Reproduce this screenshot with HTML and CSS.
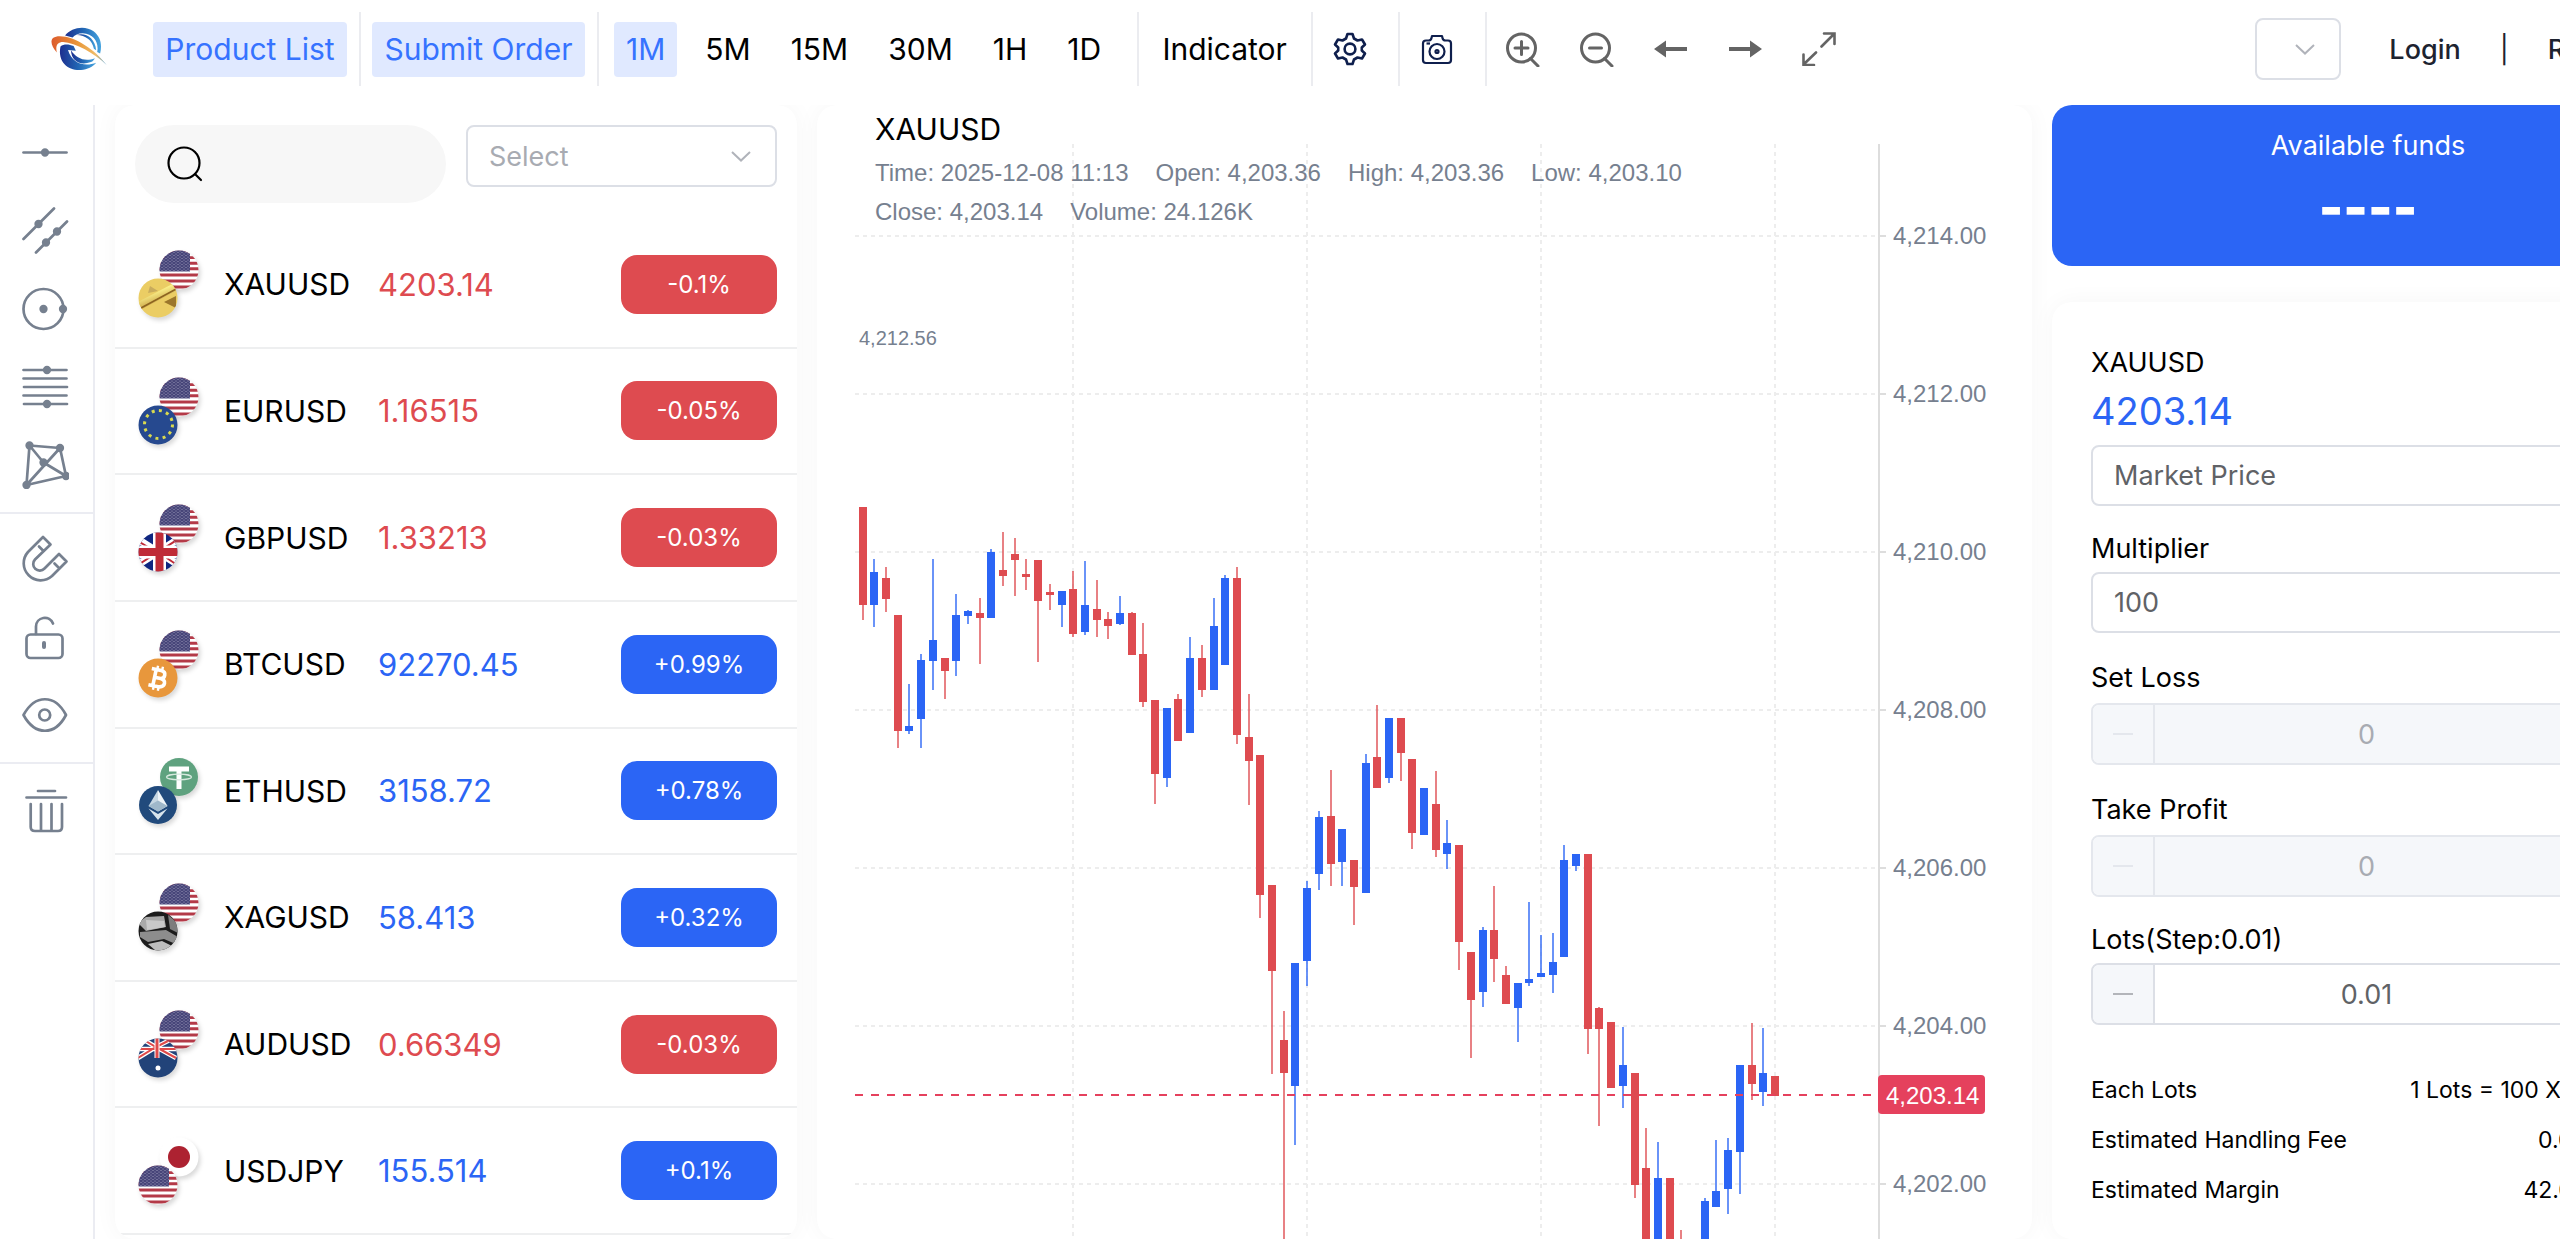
FILE: index.html
```html
<!DOCTYPE html>
<html lang="en">
<head>
<meta charset="utf-8">
<title>XAUUSD – Trade</title>
<link rel="stylesheet" href="styles.css">
</head>
<body>
<svg class="sprite" aria-hidden="true">
  <defs>
    <clipPath id="disc"><circle cx="20" cy="20" r="19.5"/></clipPath>
    <linearGradient id="blueA" x1="0" x2="1"><stop offset="0" stop-color="#1d2f8f"/><stop offset=".5" stop-color="#2166b4"/><stop offset="1" stop-color="#46a4df"/></linearGradient>
    <linearGradient id="orangeA" x1="0" x2="1"><stop offset="0" stop-color="#dd5b2c"/><stop offset=".5" stop-color="#e99a3c"/><stop offset=".8" stop-color="#f0bd6a"/><stop offset="1" stop-color="#4c9bd0"/></linearGradient>
    <linearGradient id="gold" x1="0" y1="0" x2=".5" y2="1"><stop offset="0" stop-color="#c9982f"/><stop offset=".45" stop-color="#fbf08a"/><stop offset="1" stop-color="#b5842a"/></linearGradient>
    <pattern id="stars" width="4" height="3" patternUnits="userSpaceOnUse"><rect width="4" height="3" fill="#474579"/><circle cx="1" cy="1" r=".5" fill="#b9b8d2"/><circle cx="3" cy="2.5" r=".5" fill="#b9b8d2"/></pattern>
    <symbol id="us" viewBox="0 0 40 40"><g clip-path="url(#disc)"><rect width="40" height="40" fill="#fff"/><path d="M0 2H40M0 7.6H40M0 13.2H40M0 18.8H40M0 25H40M0 31H40M0 37H40" stroke="#b43a48" stroke-width="2.9"/><path d="M0 0H31V21.5H0Z" fill="url(#stars)"/></g></symbol>
    <symbol id="xau" viewBox="0 0 40 40"><g clip-path="url(#disc)"><rect width="40" height="40" fill="#ebcd64"/><path d="M0 24 40 3V12L2 32Z" fill="url(#gold)"/><path d="M3 30 40 10" stroke="#8d6420" stroke-width="1.6"/><path d="M26 24 38 18V30Z" fill="#9b762b"/><path d="M12 8 20 13 10 15Z" fill="#c8ab5c"/></g></symbol>
    <symbol id="eu" viewBox="0 0 40 40"><circle cx="20" cy="20" r="19.5" fill="#26498f"/><circle cx="20.5" cy="19.5" r="14" fill="none" stroke="#d9d94f" stroke-width="3" stroke-dasharray="3 4.33"/></symbol>
    <symbol id="gb" viewBox="0 0 40 40"><g clip-path="url(#disc)"><rect width="40" height="40" fill="#0f2680"/><path d="M-2 6 42 34M-2 34 42 6" stroke="#fff" stroke-width="7"/><path d="M-2 8 20 21M0 33 20 20M20 20 42 6M20 20 42 35" stroke="#bf2b37" stroke-width="2"/><path d="M21.500 0V40M0 20H40" stroke="#fff" stroke-width="13"/><path d="M21.500 0V40M0 20H40" stroke="#bf2b37" stroke-width="8"/></g></symbol>
    <symbol id="btc" viewBox="0 0 40 40"><circle cx="20" cy="20" r="19.5" fill="#e8973c"/><g transform="rotate(12 20 20)" fill="none" stroke="#fff" stroke-width="3.600"><path d="M12 12H21.500Q26 12 26 16T21.500 20H16M21.500 20Q27.500 20 27.500 24T22 28.500H12M16.500 12V28"/><path d="M17.500 8V12M22.500 8V12M17.500 28V32.500M22.500 28V32.500" stroke-width="2.400"/></g></symbol>
    <symbol id="usdt" viewBox="0 0 40 40"><circle cx="20" cy="20" r="19" fill="#5fa27f"/><path d="M10 12H30M20 12V32" stroke="#fff" stroke-width="5"/><ellipse cx="20" cy="20" rx="12.500" ry="2.800" fill="none" stroke="#d7e9df" stroke-width="1.300"/></symbol>
    <symbol id="eth" viewBox="0 0 40 40"><circle cx="20" cy="20" r="19" fill="#214a7c"/><path d="M20 5 10.500 21 20 26.500Z" fill="#c7d7e2"/><path d="M20 5 29.500 21 20 26.500Z" fill="#eef4f8"/><path d="M20 15.500 10.500 21 20 26.500 29.500 21Z" fill="#9fb8ca"/><path d="M10.500 23.500 20 29 29.500 23.500 20 35Z" fill="#d8e4ec"/></symbol>
    <symbol id="xag" viewBox="0 0 40 40"><g clip-path="url(#disc)"><rect width="40" height="40" fill="#1c1c1c"/><path d="M0 12 8 6 26 5 28 16 8 20Z" fill="#a9a9a9"/><path d="M8 9 26 10 27 16 9 19Z" fill="#c9c9c9"/><path d="M30 4 40 12V22L32 18Z" fill="#7d7d7d"/><path d="M2 21 28 19 40 26V34L26 28 10 31 2 26Z" fill="#8d8d8d"/><path d="M10 33 24 30 34 35 28 40H18Z" fill="#bdbdbd"/></g></symbol>
    <symbol id="au" viewBox="0 0 40 40"><g clip-path="url(#disc)"><rect width="40" height="40" fill="#224379"/><path d="M0 20 18 9 38 20M6 2 18 9 32 2M0 11H38" fill="none" stroke="#fff" stroke-width="4.500"/><path d="M0 20 18 9 38 20M6 2 18 9 32 2M0 11H38" fill="none" stroke="#df4a4a" stroke-width="2"/><path d="M19 0V20" stroke="#fff" stroke-width="5"/><path d="M19 0V20" stroke="#df4a4a" stroke-width="3"/><circle cx="20" cy="30" r="2.500" fill="#fff"/></g></symbol>
    <symbol id="jp" viewBox="0 0 40 40"><circle cx="20" cy="20" r="19.500" fill="#fff"/><circle cx="20" cy="20" r="11" fill="#ad2231"/></symbol>
  </defs>
</svg>

<div class="page">
  <header class="topbar">
    <a class="logo" href="#" aria-label="Home">
      <svg width="57" height="44" viewBox="150 80 174 132"><path fill="url(#blueA)" d="M196 105C215 79 258 73 283 92C304 108 310 132 303 160L294 155C300 128 285 100 250 98C236 98 226 103 219 111Z"/><path fill="url(#blueA)" d="M232 103C258 95 288 112 291 150L284 145C279 118 258 104 232 103Z"/><path fill="url(#blueA)" d="M182 138C172 187 208 213 245 210C264 209 281 200 291 188C258 201 217 192 205 149L229 151L222 137C208 131 192 130 182 138Z"/><path fill="url(#blueA)" d="M214 150C215 181 240 199 275 186C281 183 284 179 287 174C258 186 231 176 214 150Z"/><path fill="url(#orangeA)" d="M171 157C150 133 145 107 180 107C226 107 288 148 323 195C285 159 228 127 190 125C172 125 166 137 171 157Z"/></svg>
    </a>
    <nav class="toolbar" aria-label="Chart toolbar">
      <button class="tool tool-on w-product">Product List</button>
      <span class="rule"></span>
      <button class="tool tool-on w-submit">Submit Order</button>
      <span class="rule"></span>
      <div class="periods">
        <button class="tool tool-on">1M</button>
        <button class="tool">5M</button>
        <button class="tool">15M</button>
        <button class="tool">30M</button>
        <button class="tool">1H</button>
        <button class="tool">1D</button>
      </div>
      <span class="rule"></span>
      <button class="tool w-indicator">Indicator</button>
      <span class="rule"></span>
      <button class="tool icon-tool" aria-label="Settings"><svg width="34" height="34" viewBox="0 0 34 34" fill="none" stroke="#0f1f4d" stroke-width="2.600" stroke-linejoin="round"><path d="M14.500 2H19.500L21 6.500L24.500 8.500L29 7.500L32 12.500L28.800 15.500V18.500L32 21.500L29 26.500L24.500 25.500L21 27.500L19.500 32H14.500L13 27.500L9.500 25.500L5 26.500L2 21.500L5.200 18.500V15.500L2 12.500L5 7.500L9.500 8.500L13 6.500Z"/><circle cx="17" cy="17" r="5.400"/></svg></button>
      <span class="rule"></span>
      <button class="tool icon-tool" aria-label="Screenshot"><svg width="34" height="34" viewBox="0 0 34 34" fill="none" stroke="#0f1f4d" stroke-width="2.200" stroke-linejoin="round"><path d="M6 8.500H8.500Q11 8.500 11.500 6L12 4H22L22.500 6Q23 8.500 25.500 8.500H28Q31 8.500 31 11.500V28Q31 31 28 31H6Q3 31 3 28V11.500Q3 8.500 6 8.500Z"/><circle cx="17" cy="19.500" r="7.500"/><circle cx="17" cy="19.500" r="1.500"/><path d="M6.500 11.500H10"/></svg></button>
      <span class="rule"></span>
      <div class="view-tools">
        <button class="tool" aria-label="Zoom in"><svg width="34" height="36" viewBox="0 0 34 36" fill="none" stroke="#646464" stroke-width="3"><circle cx="15.500" cy="17" r="14"/><path d="M9 17H22M15.500 10.500V23.500M24.500 27.500 32 35" stroke-linecap="round"/></svg></button>
        <button class="tool" aria-label="Zoom out"><svg width="34" height="36" viewBox="0 0 34 36" fill="none" stroke="#646464" stroke-width="3"><circle cx="15.500" cy="17" r="14"/><path d="M9.500 17H21.500M24.500 27.500 32 35" stroke-linecap="round"/></svg></button>
        <button class="tool" aria-label="Scroll left"><svg width="34" height="34" viewBox="0 0 34 34" fill="#646464"><path d="M0 17 12 8.500V15H33V19H12V25.500Z"/></svg></button>
        <button class="tool" aria-label="Scroll right"><svg width="34" height="34" viewBox="0 0 34 34" fill="#646464"><path d="M34 17 22 8.500V15H1V19H22V25.500Z"/></svg></button>
        <button class="tool" aria-label="Full screen"><svg width="34" height="34" viewBox="0 0 34 34" fill="none" stroke="#646464" stroke-width="2.600" stroke-linecap="round"><path d="M19.500 14.500 32 2M22 1.500H32.500V12M14 20.500 1.500 32.500M1.500 22.500V33H12"/></svg></button>
      </div>
    </nav>
    <div class="account">
      <span class="pick pick-lang"><select aria-label="Language"><option></option></select><svg width="20" height="11" viewBox="0 0 20 11"><path d="M1 1 10 9.500 19 1"/></svg></span>
      <a href="#" class="login">Login</a><span class="bar">|</span><a href="#">Register</a>
    </div>
  </header>

  <main class="workspace">
    <aside class="drawbar" aria-label="Drawing tools">
      <div class="draw-group">
        <button aria-label="Line"><svg viewBox="0 0 48 48"><path d="M2.500 23.500H45.500"/><circle cx="24" cy="23.500" r="2.800"/></svg></button>
        <button aria-label="Channel"><svg viewBox="0 0 48 48"><path d="M2.500 32 33 1.500M15 45.500 46 14.500"/><circle cx="17.500" cy="17" r="2.800"/><circle cx="36" cy="24.500" r="2.800"/><circle cx="25" cy="35.500" r="2.800"/></svg></button>
        <button aria-label="Circle"><svg viewBox="0 0 48 48"><circle class="hollow" cx="22.500" cy="24" r="20"/><circle cx="22.500" cy="24" r="2.800"/><circle cx="42" cy="24" r="2.800"/></svg></button>
        <button aria-label="Fibonacci"><svg viewBox="0 0 48 48"><path d="M2.500 7H45.500M2.500 15.500H45.500M3 24H46M2.500 32.500H45.500M3 41H46"/><circle cx="26" cy="7" r="2.800"/><circle cx="26" cy="41" r="2.800"/></svg></button>
        <button aria-label="Pattern"><svg viewBox="0 0 48 48"><path d="M8.500 4.500 39 7 45 35 5.500 44ZM8.500 4.500 22.500 21.500 45 35M39 7 5.500 44"/><circle cx="8.500" cy="4.500" r="2.800"/><circle cx="39" cy="7" r="2.800"/><circle cx="22.500" cy="21.500" r="2.800"/><circle cx="45" cy="35" r="2.800"/><circle cx="5.500" cy="44" r="2.800"/></svg></button>
      </div>
      <div class="draw-group">
        <button aria-label="Magnet"><svg viewBox="0 0 48 48"><path d="M22 2 29.500 9.500 14 24.500A6.500 6.500 0 0 0 23.500 33.500L38 19 45.500 26.500 31 41A17 17 0 0 1 7 17ZM18 11.500 21.500 15M33.500 28.500 37 32"/></svg></button>
        <button aria-label="Lock"><svg viewBox="0 0 48 48"><rect x="5.500" y="21.500" width="36" height="23.500" rx="4"/><path d="M15 21V13.500A8.800 8.800 0 0 1 32 10.500"/><path class="slot" d="M23 30V34"/></svg></button>
        <button aria-label="Show"><svg viewBox="0 0 48 48"><path d="M2.500 24C14 3 34 3 45 24C34 45 14 45 2.500 24Z"/><circle class="hollow" cx="23.700" cy="24" r="5.500"/></svg></button>
      </div>
      <div class="draw-group">
        <button aria-label="Delete"><svg viewBox="0 0 48 48"><path d="M17 4H34M5.500 10.500H45M9.700 17V40Q9.700 44 14 44H37Q41 44 41 40V17M20 17V43M30.500 17V43"/></svg></button>
      </div>
    </aside>

    <section class="products" aria-label="Product list">
      <div class="filters">
        <label class="search"><svg width="36" height="36" viewBox="0 0 36 36" fill="none" stroke="#000" stroke-width="2.200"><circle cx="17" cy="17" r="15.500"/><path d="M28 28 34 34" stroke-linecap="round"/></svg><input type="search" aria-label="Search products"></label>
        <span class="pick"><select aria-label="Category"><option>Select</option></select><svg width="20" height="11" viewBox="0 0 20 11"><path d="M1 1 10 9.500 19 1"/></svg></span>
      </div>
      <ul class="quotes" id="quotes"></ul>
    </section>

    <section class="chart" aria-label="Price chart">
      <svg class="plot" id="plot" role="img" aria-label="XAUUSD one minute candles"></svg>
      <div class="legend">
        <h1>XAUUSD</h1>
        <p class="ohlc"><span>Time: 2025-12-08 11:13</span><span>Open: 4,203.36</span><span>High: 4,203.36</span><span>Low: 4,203.10</span><span>Close: 4,203.14</span><span>Volume: 24.126K</span></p>
      </div>
    </section>

    <section class="order" aria-label="Submit order">
      <div class="funds"><span>Available funds</span><strong>----</strong></div>
      <form class="ticket">
        <h2>XAUUSD</h2>
        <p class="last">4203.14</p>
        <select class="box" aria-label="Order type"><option>Market Price</option></select>
        <label class="cap" for="mult">Multiplier</label>
        <select class="box" id="mult"><option>100</option></select>
        <label class="cap cap-loose" for="loss">Set Loss</label>
        <div class="stepper off"><button type="button" aria-label="Less" disabled><i></i></button><input id="loss" value="0" disabled><button type="button" aria-label="More" disabled><i></i></button></div>
        <label class="cap cap-loose" for="profit">Take Profit</label>
        <div class="stepper off"><button type="button" aria-label="Less" disabled><i></i></button><input id="profit" value="0" disabled><button type="button" aria-label="More" disabled><i></i></button></div>
        <label class="cap" for="lots">Lots(Step:0.01)</label>
        <div class="stepper"><button type="button" aria-label="Less"><i></i></button><input id="lots" value="0.01"><button type="button" aria-label="More"><i></i></button></div>
        <dl class="facts">
          <div><dt>Each Lots</dt><dd>1 Lots = 100 XAUUSD</dd></div>
          <div><dt>Estimated Handling Fee</dt><dd>0.00 USD</dd></div>
          <div><dt>Estimated Margin</dt><dd>42.03 USD</dd></div>
        </dl>
      </form>
    </section>
  </main>
</div>
<script src="app.js"></script>
</body>
</html>
```
FILE: styles.css
```css
:root {
  --blue: #2b65f5;
  --red: #de4b50;
  --line: #dcdfe6;
  --slate: #76808f;
}
* { box-sizing: border-box; }
body {
  margin: 0;
  overflow: hidden;
  background: #fff;
  color: #000;
  font-family: "Inter", "Liberation Sans", sans-serif;
  font-size: 30px;
}
button, input, select { font: inherit; color: inherit; margin: 0; }
button { border: 0; background: none; padding: 0; cursor: pointer; }
h1, h2, p, ul, dl, dd { margin: 0; padding: 0; font-weight: 400; }
a { color: inherit; text-decoration: none; }
svg { display: block; flex: none; }
.sprite { position: absolute; width: 0; height: 0; }

.page {
  min-width: 2704px;
  height: 100vh;
  display: flex;
  flex-direction: column;
}

/* top bar */
.topbar {
  display: flex;
  align-items: center;
  height: 105px;
  padding: 0 50px 7px;
  flex: none;
}
.logo { margin-right: 46px; }
.toolbar { display: flex; align-items: center; }
.tool {
  height: 55px;
  padding: 0 12px;
  border-radius: 4px;
  display: flex;
  align-items: center;
  justify-content: center;
  white-space: nowrap;
}
.tool-on { background: #e0e9ff; color: #3673ff; }
.rule { width: 2px; height: 74px; background: #ebecf0; margin: 0 11px 0 12px; }
.w-product { width: 194px; }
.w-submit { width: 213px; }
.w-indicator { width: 149px; }
.icon-tool { width: 62px; padding-left: 9px; justify-content: flex-start; }
.periods { display: flex; gap: 16px; padding: 0 12px 0 4px; }
.view-tools { display: flex; gap: 26px; padding-left: 1px; }
.view-tools .tool { width: 48px; }
.account {
  display: flex;
  align-items: center;
  gap: 39px;
  margin-left: auto;
  font-size: 27px;
  font-weight: 500;
  color: #1d2330;
}
.login { margin-left: 9px; }
.bar { font-weight: 400; }

/* drop-downs */
.pick { display: grid; align-items: center; }
.pick > * { grid-area: 1 / 1; }
.pick select, .box {
  appearance: none;
  width: 100%;
  height: 62px;
  border: 2px solid var(--line);
  border-radius: 8px;
  background: #fff;
  font-size: 27px;
}
.pick select { padding: 0 21px; color: #a8abb2; }
.pick svg {
  justify-self: end;
  margin-right: 26px;
  fill: none;
  stroke: #b0b3ba;
  stroke-width: 2px;
  pointer-events: none;
}
.pick-lang { width: 86px; }

/* columns */
.workspace {
  flex: 1;
  min-height: 0;
  display: flex;
  gap: 20px;
  padding-right: 20px;
  overflow: hidden;
}
.drawbar { width: 95px; padding-top: 3px; border-right: 2px solid #ebecf2; flex: none; }
.draw-group { padding: 6px 0 8px; border-bottom: 2px solid #ebecf2; }
.draw-group:last-child { border: 0; padding-top: 8px; }
.draw-group button {
  display: flex;
  align-items: center;
  padding-left: 21px;
  width: 100%;
  height: 78px;
}
.draw-group svg {
  width: 48px;
  height: 48px;
  fill: none;
  stroke: var(--slate);
  stroke-width: 2.7px;
  stroke-linecap: round;
  stroke-linejoin: round;
}
.draw-group circle { fill: var(--slate); }
.draw-group .hollow { fill: none; }
.draw-group .slot { stroke-width: 4px; }

.products, .chart, .ticket {
  overflow: hidden;
  background: #fff;
  border-radius: 20px;
  box-shadow: 0 0 24px rgba(0, 0, 0, .04);
}

/* product list */
.products { width: 682px; flex: none; }
.filters {
  display: grid;
  grid-template-columns: repeat(2, minmax(0, 1fr));
  gap: 20px;
  align-items: start;
  padding: 20px 20px 0;
}
.search {
  display: flex;
  align-items: center;
  gap: 12px;
  height: 78px;
  padding: 0 32px;
  border-radius: 39px;
  background: #f7f7f7;
}
.search input { flex: 1; min-width: 0; border: 0; background: none; outline: 0; font-size: 27px; }
.quotes {
  display: grid;
  grid-template-rows: repeat(8, 1fr);
  height: 1013px;
  margin-top: 19px;
  list-style: none;
}
.quote {
  display: flex;
  align-items: center;
  padding: 0 20px;
  border-bottom: 2px solid #eeeff0;
}
.pair { width: 72px; height: 80px; margin-right: 17px; }
.pair use { filter: drop-shadow(2px 3px 2px rgba(0, 0, 0, .15)); }
.symbol { width: 154px; }
.price { flex: 1; font-size: 31px; }
.change {
  width: 156px;
  height: 59px;
  border-radius: 16px;
  color: #fff;
  font-size: 24px;
  line-height: 59px;
  text-align: center;
}
.down .price { color: var(--red); }
.down .change { background: var(--red); }
.up .price { color: var(--blue); }
.up .change { background: var(--blue); }

/* chart */
.chart { position: relative; flex: 1; }
.plot { width: 100%; height: 100%; font-family: "Liberation Sans", sans-serif; font-size: 24px; fill: var(--slate); }
.legend { position: absolute; top: 4px; left: 58px; width: 880px; }
.legend h1 { font-size: 30px; line-height: 40px; }
.ohlc {
  display: flex;
  flex-wrap: wrap;
  column-gap: 27px;
  margin-top: 4px;
  font-family: "Liberation Sans", sans-serif;
  font-size: 24px;
  line-height: 39px;
  color: var(--slate);
}
.grid { stroke: #ededed; stroke-width: 2px; stroke-dasharray: 4 4; }
.axis { stroke: #dddddd; stroke-width: 2px; }
.mark { font-size: 20px; }
.now { stroke: #e5415d; stroke-width: 2px; stroke-dasharray: 8 8; }
.tag { fill: #e5415d; }
.tag-text { fill: #fff; }
.c-up { fill: var(--blue); }
.c-down { fill: var(--red); }
.wick { opacity: .7; }

/* order column */
.order { width: 632px; flex: none; display: flex; flex-direction: column; gap: 36px; }
.funds {
  height: 161px;
  flex: none;
  border-radius: 20px;
  background: var(--blue);
  color: #fff;
  text-align: center;
  font-size: 27px;
  display: flex;
  flex-direction: column;
  padding-top: 21px;
}
.funds span { line-height: 40px; }
.funds strong { font-size: 52px; line-height: 60px; margin-top: 12px; font-weight: 900; }
.ticket { flex: 1; padding: 41px 42px 0 39px; font-size: 27px; }
.ticket h2 { font-size: 27px; line-height: 40px; }
.last { font-size: 38px; line-height: 56px; color: var(--blue); margin-bottom: 6px; }
.box { height: 61px; padding: 0 21px; color: #606266; display: block; }
.cap { display: block; line-height: 40px; margin: 23px 0 3px; }
.cap-loose { margin: 25px 0 5px; }
.stepper {
  display: flex;
  height: 62px;
  border: 2px solid var(--line);
  border-radius: 8px;
  overflow: hidden;
  color: #606266;
}
.stepper button {
  width: 62px;
  background: #f5f7fa;
  border-right: 2px solid var(--line);
  display: flex;
  align-items: center;
  justify-content: center;
}
.stepper button:last-child { border-right: 0; border-left: 2px solid var(--line); }
.stepper i { width: 20px; height: 2px; background: #b3b5ba; }
.stepper input { flex: 1; min-width: 0; border: 0; padding: 0; text-align: center; background: #fff; }
.off, .off button, .off button:last-child { border-color: #e4e7ed; }
.off input { background: #f5f7fa; color: #a8abb2; }
.off i { background: #e4e7ed; }
.facts { margin-top: 40px; font-size: 23px; line-height: 50px; }
.facts div { display: flex; justify-content: space-between; }
```
FILE: app.js
```js
// Product list: symbol, price, change, front coin, back coin
const quotes = [
  ['XAUUSD', '4203.14', '-0.1%', 'xau', 'us'],
  ['EURUSD', '1.16515', '-0.05%', 'eu', 'us'],
  ['GBPUSD', '1.33213', '-0.03%', 'gb', 'us'],
  ['BTCUSD', '92270.45', '+0.99%', 'btc', 'us'],
  ['ETHUSD', '3158.72', '+0.78%', 'eth', 'usdt'],
  ['XAGUSD', '58.413', '+0.32%', 'xag', 'us'],
  ['AUDUSD', '0.66349', '-0.03%', 'au', 'us'],
  ['USDJPY', '155.514', '+0.1%', 'us', 'jp'],
];
document.getElementById('quotes').innerHTML = quotes.map(([s, p, c, front, back]) =>
  `<li class="quote ${c[0] === '-' ? 'down' : 'up'}">
    <svg class="pair" viewBox="0 0 72 80"><use href="#${back}" x="24" y="6" width="40" height="40"/><use href="#${front}" x="3" y="34" width="40" height="40"/></svg>
    <span class="symbol">${s}</span><span class="price">${p}</span><span class="change">${c}</span>
  </li>`).join('');

// Candles: direction, then high, body top, body bottom and low in plot units
const candles = [
  ['d',507,507,605,620],['u',559,572,605,627],['d',567,578,599,612],['d',615,615,731,748],['u',684,726,731,734],
  ['u',654,660,719,748],['u',559,640,661,690],['d',658,658,671,699],['u',594,615,661,676],['u',610,611,616,624],
  ['d',598,613,618,664],['u',549,552,618,618],['d',532,570,576,586],['d',538,554,560,596],['d',559,574,577,590],
  ['d',560,560,601,662],['d',584,592,595,610],['u',591,591,605,627],['d',571,589,634,637],['u',561,605,632,635],
  ['d',580,609,620,637],['d',612,619,626,639],['u',596,613,624,625],['d',612,613,655,655],['d',623,654,702,707],
  ['d',700,700,774,804],['u',708,708,778,787],['d',694,699,741,741],['u',637,658,733,733],['d',645,658,690,697],
  ['u',598,626,690,690],['u',575,578,665,665],['d',567,578,735,744],['d',694,737,761,805],['d',755,755,895,918],
  ['d',885,885,971,1074],['d',1011,1040,1073,1260],['u',963,963,1086,1145],['u',881,888,961,986],['u',811,817,874,890],
  ['d',770,816,864,886],['u',829,829,862,886],['d',860,860,887,925],['u',754,763,893,893],['d',705,757,788,788],
  ['u',718,718,778,783],['d',718,718,753,781],['d',759,759,833,849],['u',788,788,835,835],['d',771,804,850,857],
  ['u',820,843,854,869],['d',845,845,942,970],['d',952,952,1000,1058],['u',927,930,992,1007],['d',886,930,959,982],
  ['d',966,975,1004,1004],['u',983,983,1008,1042],['u',902,979,983,986],['u',935,973,977,977],['u',933,962,975,993],
  ['u',845,860,957,957],['u',854,854,866,871],['d',854,854,1029,1054],['d',1007,1008,1029,1126],['d',1022,1022,1088,1088],
  ['u',1027,1065,1086,1108],['d',1073,1073,1185,1198],['d',1128,1168,1260,1260],['u',1142,1178,1260,1260],['d',1178,1178,1260,1260],
  ['d',1230,1250,1260,1260],['d',1250,1250,1260,1260],['u',1198,1201,1260,1260],['u',1140,1191,1207,1207],['u',1138,1150,1189,1214],
  ['u',1065,1065,1152,1194],['d',1023,1065,1084,1100],['u',1028,1073,1092,1106],['d',1076,1076,1096,1096],
];
const FIRST = 862.7, STEP = 11.695;
const AXIS = 1879, TOP = 144, BOTTOM = 1300;
const priceY = p => Math.round(235.5 + (4214 - p) * 79.07);
const line = (x1, y1, x2, y2, c) => `<line class="${c}" x1="${x1}" y1="${y1}" x2="${x2}" y2="${y2}"/>`;

let out = '';
for (const i of [18, 38, 58, 78]) {
  const x = Math.round(FIRST + i * STEP);
  out += line(x, TOP, x, BOTTOM, 'grid');
}
for (let p = 4214; p >= 4202; p -= 2) {
  const y = priceY(p);
  out += line(855, y, AXIS, y, 'grid') + line(AXIS, y, AXIS + 7, y, 'axis');
  out += `<text x="${AXIS + 14}" y="${y + 8}">${p.toLocaleString('en-US')}.00</text>`;
}
out += line(AXIS, TOP, AXIS, BOTTOM, 'axis');
candles.forEach(([dir, hi, top, bottom, lo], i) => {
  const x = Math.round(FIRST + i * STEP);
  const cls = dir === 'u' ? 'c-up' : 'c-down';
  out += `<rect class="${cls} wick" x="${x - 1}" y="${hi}" width="2" height="${top - hi}"/>`;
  out += `<rect class="${cls} wick" x="${x - 1}" y="${bottom}" width="2" height="${lo - bottom}"/>`;
  out += `<rect class="${cls}" x="${x - 4}" y="${top}" width="8" height="${bottom - top}"/>`;
});
const y = 1095;
out += line(855, y, AXIS, y, 'now');
out += `<rect class="tag" x="${AXIS - 1}" y="${y - 20}" width="107" height="39" rx="4"/><text class="tag-text" x="${AXIS + 7}" y="${y + 9}">4,203.14</text>`;
out += `<text class="mark" x="859" y="345">4,212.56</text>`;
document.getElementById('plot').innerHTML = `<g transform="translate(-817 -105)">${out}</g>`;
```
